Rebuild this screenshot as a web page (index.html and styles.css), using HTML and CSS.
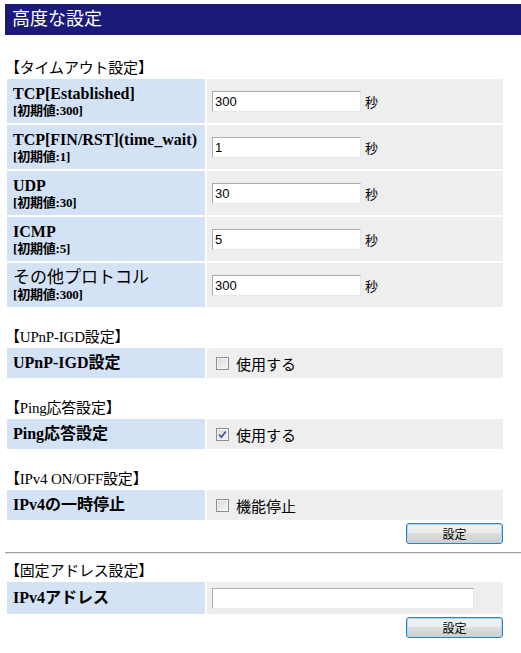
FILE: index.html
```html
<!DOCTYPE html>
<html lang="ja">
<head>
<meta charset="UTF-8"/>
<title>高度な設定</title>
<link rel="stylesheet" href="styles.css">
</head>
<body>

<!-- ─── TITLE ─────────────────────────────────────────── -->
<h1 class="title">高度な設定</h1>

<!-- ─── TIMEOUT ───────────────────────────────────────── -->
<h2 class="head first">【タイムアウト設定】</h2>
<table class="opts tall">
  <tr><th>TCP[Established]<small>[初期値:300]</small></th>
      <td><input class="num" type="text" value="300"><span class="unit">秒</span></td></tr>
  <tr><th>TCP[FIN/RST](time_wait)<small>[初期値:1]</small></th>
      <td><input class="num" type="text" value="1"><span class="unit">秒</span></td></tr>
  <tr><th>UDP<small>[初期値:30]</small></th>
      <td><input class="num" type="text" value="30"><span class="unit">秒</span></td></tr>
  <tr><th>ICMP<small>[初期値:5]</small></th>
      <td><input class="num" type="text" value="5"><span class="unit">秒</span></td></tr>
  <tr><th><span class="jp">その他プロトコル</span><small>[初期値:300]</small></th>
      <td><input class="num" type="text" value="300"><span class="unit">秒</span></td></tr>
</table>

<!-- ─── UPnP ──────────────────────────────────────────── -->
<h2 class="head">【UPnP-IGD設定】</h2>
<table class="opts">
  <tr><th>UPnP-IGD設定</th>
      <td><label class="chk"><span class="box"></span>使用する</label></td></tr>
</table>

<!-- ─── PING ──────────────────────────────────────────── -->
<h2 class="head">【Ping応答設定】</h2>
<table class="opts">
  <tr><th>Ping応答設定</th>
      <td><label class="chk"><span class="box on"><svg viewBox="0 0 9 9" width="9" height="9"><path d="M1.2 4.6 L3.4 7.2 L7.8 1.4" fill="none" stroke="#3a54a8" stroke-width="1.7"/></svg></span>使用する</label></td></tr>
</table>

<!-- ─── IPv4 ON/OFF ───────────────────────────────────── -->
<h2 class="head">【IPv4 ON/OFF設定】</h2>
<table class="opts">
  <tr><th>IPv4の一時停止</th>
      <td><label class="chk"><span class="box"></span>機能停止</label></td></tr>
</table>
<div class="act"><button class="btn">設定</button></div>

<div class="rule"></div>

<!-- ─── STATIC ADDRESS ────────────────────────────────── -->
<h2 class="head addr">【固定アドレス設定】</h2>
<table class="opts wide">
  <tr><th>IPv4アドレス</th>
      <td><input class="ip" type="text" value=""></td></tr>
</table>
<div class="act"><button class="btn">設定</button></div>

</body>
</html>
```

FILE: styles.css
```css
/* base */
body{margin:4px 0 0 5px;font-family:"Liberation Serif","Noto Sans CJK JP",serif;color:#000;background:#fff}

/* ─── TITLE BAR ─────────────────────────────────────── */
.title{margin:0;height:31px;line-height:31px;padding-left:7px;background:#1b1a78;color:#fff;
  font:normal 18px "Noto Sans CJK JP",sans-serif}

/* ─── SECTION HEADINGS ──────────────────────────────── */
.head{margin:19px 0 0;font-weight:normal;font-size:15px;line-height:18px;height:18px;
  font-family:"Liberation Serif","Noto Sans CJK JP",serif;letter-spacing:-.2px}
.head.first{margin-top:24px}
.head.addr{margin-top:8px}

/* ─── OPTION TABLES ─────────────────────────────────── */
.opts{border-spacing:2px;width:500px;margin-left:0}
.opts th{box-sizing:border-box;width:198px;background:#d3e2f5;text-align:left;padding:0 6px;height:30px;
  font-size:16px;font-weight:bold;line-height:18px;vertical-align:middle;white-space:nowrap}
.opts td{box-sizing:border-box;background:#eee;padding:0 0 0 5px;height:30px;vertical-align:middle}
.opts.tall th,.opts.tall td{height:44px}
.opts.wide th,.opts.wide td{height:32px}
.opts small{display:block;font-size:13px;line-height:15px;letter-spacing:-.2px}
.opts .jp{font-weight:normal;font-size:17px}

/* text fields */
.num,.ip{box-sizing:border-box;height:21px;border:1px solid #abadb3;border-color:#abadb3 #e3e9ef #e3e9ef #abadb3;
  background:#fff;padding:0 2px;font:13px "Liberation Sans",Arial,sans-serif;color:#000;vertical-align:middle;margin:0}
.num{width:149px}
.ip{width:262px}
.unit{margin-left:4px;font:13px "Noto Sans CJK JP",sans-serif;vertical-align:middle}

/* checkboxes */
.chk{display:inline-flex;align-items:center;gap:7px;padding-left:4px;font:15px "Noto Sans CJK JP",sans-serif}
.box{box-sizing:border-box;width:13px;height:13px;border:1px solid #8e8f8f;
  background:linear-gradient(135deg,#d8d8d8,#f7f7f7);display:grid;place-items:center;box-shadow:inset 0 0 0 1px #f4f4f4}
.box svg{display:block}

/* ─── BUTTONS & RULE ────────────────────────────────── */
.act{width:498px;display:flex;justify-content:flex-end;margin-top:1px}
.btn{width:97px;height:21px;padding:0;border:1px solid #3c7fb1;border-radius:3px;
  background:linear-gradient(#f2f2f2 0%,#ebebeb 50%,#dddddd 50%,#cfcfcf 100%);
  box-shadow:inset 0 0 0 1px #a7d9f5;font:12px "Noto Sans CJK JP",sans-serif;color:#000;line-height:19px}
.rule{margin-top:8px;border-top:1px solid #a0a0a0;border-bottom:1px solid #e6e6e6}
```
